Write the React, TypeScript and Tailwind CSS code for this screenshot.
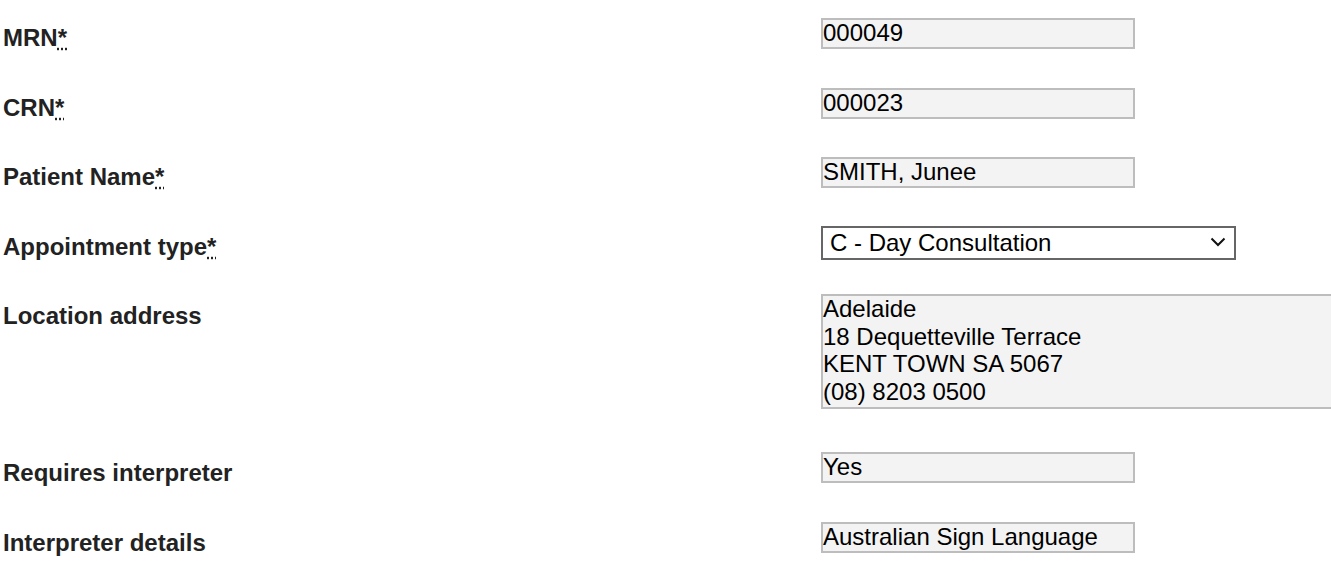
type FieldRowProps = {
  label: string
  required?: boolean
  rowClass: string
  labelClass?: string
  children: React.ReactNode
}

function FieldRow({ label, required, rowClass, labelClass = 'pt-[6px]', children }: FieldRowProps) {
  return (
    <div className={`flex items-start ${rowClass}`}>
      <label className={`w-[821px] shrink-0 pl-[3px] text-[24px] font-bold leading-[27.6px] text-[#222] ${labelClass}`}>
        {label}
        {required ? <abbr title="required">*</abbr> : null}
      </label>
      {children}
    </div>
  )
}

function ReadonlyBox({ value }: { value: string }) {
  return (
    <div className="h-[31px] w-[314px] shrink-0 border-2 border-[#bdbdbd] bg-[#f3f3f3] text-[24px] leading-[25px] text-black">
      {value}
    </div>
  )
}

export default function App() {
  const address = ['Adelaide', '18 Dequetteville Terrace', 'KENT TOWN SA 5067', '(08) 8203 0500']

  return (
    <div className="h-[571px] w-full overflow-hidden bg-white pt-[18px] font-['Liberation_Sans',Arial,sans-serif]">
      <FieldRow label="MRN" required rowClass="h-[70px]">
        <ReadonlyBox value="000049" />
      </FieldRow>
      <FieldRow label="CRN" required rowClass="h-[69px]">
        <ReadonlyBox value="000023" />
      </FieldRow>
      <FieldRow label="Patient Name" required rowClass="h-[69px]">
        <ReadonlyBox value="SMITH, Junee" />
      </FieldRow>
      <FieldRow label="Appointment type" required rowClass="h-[68px]" labelClass="pt-[7px]">
        <div className="relative h-[34px] w-[415px] shrink-0">
          <select
            defaultValue="C"
            className="h-full w-full appearance-none border-2 border-[#666] bg-white pl-[7px] text-[24px] leading-[28px] text-black outline-none"
          >
            <option value="C">C - Day Consultation</option>
            <option value="O">O - Outpatient</option>
          </select>
          <svg
            className="pointer-events-none absolute right-[10px] top-[11px]"
            width="16"
            height="10"
            viewBox="0 0 16 10"
            fill="none"
          >
            <path d="M1.5 1.5 L8 8 L14.5 1.5" stroke="#111" strokeWidth="2" />
          </svg>
        </div>
      </FieldRow>
      <FieldRow label="Location address" rowClass="h-[158px]" labelClass="pt-[8px]">
        <div className="h-[115px] w-[540px] shrink-0 border-2 border-[#bdbdbd] bg-[#f3f3f3] text-[24px] leading-[27.6px] text-black">
          <div className="-mt-[1px]">
            {address.map((line) => (
              <div key={line}>{line}</div>
            ))}
          </div>
        </div>
      </FieldRow>
      <FieldRow label="Requires interpreter" rowClass="h-[70px]" labelClass="pt-[7px]">
        <ReadonlyBox value="Yes" />
      </FieldRow>
      <FieldRow label="Interpreter details" rowClass="h-[49px]" labelClass="pt-[7px]">
        <ReadonlyBox value="Australian Sign Language" />
      </FieldRow>
    </div>
  )
}
